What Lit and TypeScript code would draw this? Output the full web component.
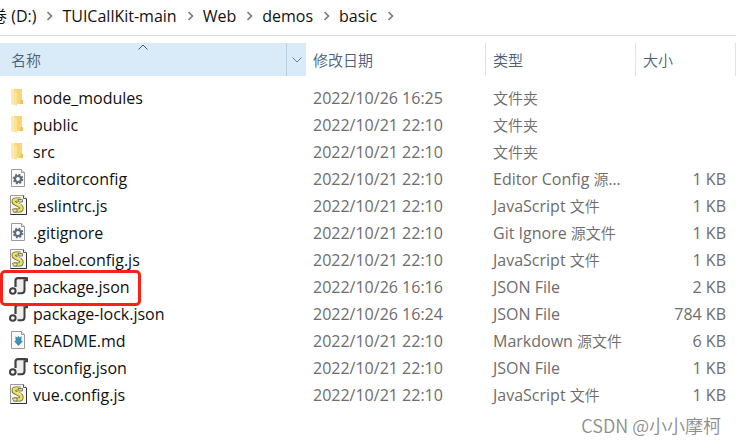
import { LitElement, html, css, svg, nothing } from "lit";
import { customElement, property } from "lit/decorators.js";

type Kind = "folder" | "config" | "script" | "json" | "markdown";

interface Entry {
  name: string;
  kind: Kind;
  date: string;
  latin: string;
  cjk: string;
  size: string;
  marked?: boolean;
}

const OCT21 = "2022/10/21 22:10";

const ENTRIES: Entry[] = [
  { name: "node_modules", kind: "folder", date: "2022/10/26 16:25", latin: "", cjk: "文件夹", size: "" },
  { name: "public", kind: "folder", date: OCT21, latin: "", cjk: "文件夹", size: "" },
  { name: "src", kind: "folder", date: OCT21, latin: "", cjk: "文件夹", size: "" },
  { name: ".editorconfig", kind: "config", date: OCT21, latin: "Editor Config ", cjk: "源...", size: "1 KB" },
  { name: ".eslintrc.js", kind: "script", date: OCT21, latin: "JavaScript ", cjk: "文件", size: "1 KB" },
  { name: ".gitignore", kind: "config", date: OCT21, latin: "Git Ignore ", cjk: "源文件", size: "1 KB" },
  { name: "babel.config.js", kind: "script", date: OCT21, latin: "JavaScript ", cjk: "文件", size: "1 KB" },
  { name: "package.json", kind: "json", date: "2022/10/26 16:16", latin: "JSON File", cjk: "", size: "2 KB", marked: true },
  { name: "package-lock.json", kind: "json", date: "2022/10/26 16:24", latin: "JSON File", cjk: "", size: "784 KB" },
  { name: "README.md", kind: "markdown", date: OCT21, latin: "Markdown ", cjk: "源文件", size: "6 KB" },
  { name: "tsconfig.json", kind: "json", date: OCT21, latin: "JSON File", cjk: "", size: "1 KB" },
  { name: "vue.config.js", kind: "script", date: OCT21, latin: "JavaScript ", cjk: "文件", size: "1 KB" },
];

const page = svg`
  <path d="M2.5 1.5h10l3 3v14h-13z" fill="#fafafa" stroke="#9a9a9a"/>
  <path d="M12.5 1.5v3h3" fill="#e6e6e6" stroke="#9a9a9a"/>`;

const ICONS: Record<Kind, unknown> = {
  folder: svg`
    <path d="M5 2h8v11h1v4H5z" fill="#f8d674"/>
    <path d="M12 13h2v4h-3z" fill="#eec25a"/>
    <path d="M2 2h1l5 3v13.700L2 17z" fill="#fde39a"/>
    <path d="M2 2h1l2 1.200V17.800L2 17z" fill="#fdeab2"/>`,
  config: svg`${page}
    <circle cx="9" cy="11" r="4.4" fill="none" stroke="#5d6f7c" stroke-width="1.8" stroke-dasharray="1.9 1.55"/>
    <circle cx="9" cy="11" r="3" fill="#fff" stroke="#5d6f7c" stroke-width="2.2"/>`,
  script: svg`
    <path d="M1.500 .5h13l3 3v16h-16z" fill="#f7f7f4" stroke="#9a9a9a"/>
    <path d="M17.500 4v15.500h-16" fill="none" stroke="#303030"/>
    <path d="M14.500 .5v3h3" fill="#fff" stroke="#555"/>
    <path d="M11.500 4.500H7c-3 0-3 3-.5 4.200l4 2c3 1.500 2.500 4.800-.5 4.800H5" fill="none" stroke="#6d6b4c" stroke-width="4.200"/>
    <path d="M11.500 4.500H7c-3 0-3 3-.5 4.200l4 2c3 1.500 2.500 4.800-.5 4.800H5" fill="none" stroke="#eee25a" stroke-width="2.600"/>
    <path d="M9 4.500h4.500v2.500H10z" fill="#dcdccb" stroke="#6d6b4c" stroke-width=".8"/>
    <path d="M8 8l4 2.200" stroke="#fbf7b0"/>
    <path d="M3.500 14h4.500v3H4.500z" fill="#f4ee86" stroke="#6d6b4c" stroke-width=".8"/>`,
  json: svg`
    <path d="M6 2h9v14H7l-1-4z" fill="#eee"/>
    <path d="M6.500 11V4.500Q6.500 2.200 9 2.200h8" fill="none" stroke="#3f3f41" stroke-width="2.200"/>
    <path d="M18 1.200v3h-2.500v10q0 3-3 3H8.500" fill="none" stroke="#3f3f41" stroke-width="2"/>
    <circle cx="3.800" cy="15" r="2.800" fill="#fff" stroke="#3f3f41" stroke-width="2"/>`,
  markdown: svg`${page}
    <path d="M6.500 6l1.700 1.500L9.500 6 11 7.500 12.500 6v5H14l-4.500 5L5 11h1.500z" fill="#3f8fb0"/>`,
};

@customElement("file-icon")
export class FileIcon extends LitElement {
  @property() kind: Kind = "folder";

  static styles = css`
    :host { display: block; width: 20px; height: 20px; flex: none; }
    .icon { display: block; width: 20px; height: 20px; }
  `;

  render() {
    return html`<svg class="icon" viewBox="0 0 20 20" aria-hidden="true">${ICONS[this.kind]}</svg>`;
  }
}

@customElement("app-root")
export class AppRoot extends LitElement {
  static styles = css`
    :host {
      display: block;
      position: relative;
      overflow: hidden;
      min-height: 100vh;
      background: #fff;
      color: #111;
      font: 16px/26px "Open Sans", "Noto Sans CJK SC", sans-serif;
    }
    .path {
      height: 35px;
      border-bottom: 1px solid #d9d9d9;
      overflow: hidden;
    }
    .crumbs {
      display: flex;
      margin: 0 0 0 -9px;
      padding: 3px 0 0;
      list-style: none;
    }
    .crumb { display: flex; align-items: center; white-space: nowrap; }
    .crumb-link { color: inherit; text-decoration: none; }
    .sep { width: 7px; height: 10px; margin: 0 9px 0 10px; }
    .files {
      width: 100%;
      margin-top: 7px;
      table-layout: fixed;
      border-collapse: separate;
      border-spacing: 0;
    }
    .c-date { width: 180px; }
    .c-type { width: 150px; }
    .c-size { width: 100px; }
    .head {
      height: 33px;
      padding: 0;
      border-right: 1px solid #e2e2e2;
      box-sizing: border-box;
      text-align: left;
    }
    .head.sorted { background: #d9ebf9; border-right: 0; }
    .split { display: flex; position: relative; height: 33px; }
    .sort {
      display: block;
      flex: 1;
      width: 100%;
      height: 33px;
      padding: 0 7px;
      border: 0;
      background: none;
      color: #4c607a;
      font: 350 15px/30px "Noto Sans CJK SC", sans-serif;
      text-align: left;
    }
    .sorted .sort { padding-left: 11px; }
    .up { position: absolute; top: 1px; left: 50%; width: 10px; height: 6px; margin-left: -15px; }
    .drop {
      display: flex;
      align-items: center;
      justify-content: center;
      width: 20px;
      padding: 0;
      border: 0;
      border-left: 1px solid #b9d0e2;
      background: none;
    }
    .down { width: 10px; height: 6px; }
    .body::before { content: ""; display: block; height: 9px; }
    .cell {
      height: 27px;
      padding: 0 7px;
      color: #6d6d6d;
      line-height: 26px;
      vertical-align: top;
      white-space: nowrap;
      overflow: hidden;
    }
    .cell.name { padding: 0 0 0 9px; color: #111; text-align: left; font-weight: 400; }
    .cell.size { padding-right: 10px; text-align: right; }
    .cell.marked { position: relative; overflow: visible; }
    .file { display: flex; align-items: flex-start; gap: 4px; }
    .glyph { margin-top: 2px; }
    .cjk { font: 350 15px/20px "Noto Sans CJK SC", sans-serif; }
    .ring {
      position: absolute;
      left: 0;
      top: -4px;
      width: 141px;
      height: 36px;
      box-sizing: border-box;
      border: 3px solid #fb2018;
      border-radius: 5px;
      pointer-events: none;
    }
    .mark {
      position: absolute;
      right: 15px;
      bottom: 6px;
      margin: 0;
      color: #8d8d8d;
      font: 350 18px/26px "Noto Sans CJK SC", sans-serif;
    }
  `;

  private crumb(label: string) {
    return html`<li class="crumb">
      <a class="crumb-link" href="#">${label}</a>
      <svg class="sep" viewBox="0 0 7 10" aria-hidden="true">
        <path d="M1.500 1L5.500 5l-4 4" fill="none" stroke="#777" stroke-width="1.600"/>
      </svg>
    </li>`;
  }

  private row(e: Entry) {
    return html`<tr>
      <th scope="row" class="cell name ${e.marked ? "marked" : ""}">
        <div class="file"><file-icon class="glyph" .kind=${e.kind}></file-icon><span>${e.name}</span></div>
        ${e.marked ? html`<div class="ring"></div>` : nothing}
      </th>
      <td class="cell">${e.date}</td>
      <td class="cell">${e.latin}${e.cjk ? html`<span class="cjk">${e.cjk}</span>` : nothing}</td>
      <td class="cell size">${e.size}</td>
    </tr>`;
  }

  render() {
    return html`
      <nav class="path" aria-label="路径">
        <ol class="crumbs">
          ${["卷 (D:)", "TUICallKit-main", "Web", "demos", "basic"].map((c) => this.crumb(c))}
        </ol>
      </nav>
      <table class="files">
        <colgroup>
          <col /><col class="c-date" /><col class="c-type" /><col class="c-size" />
        </colgroup>
        <thead>
          <tr>
            <th scope="col" class="head sorted" aria-sort="ascending">
              <div class="split">
                <button class="sort" type="button">名称
                  <svg class="up" viewBox="0 0 10 6" aria-hidden="true"><path d="M.5 5.500L5 1l4.500 4.500" fill="none" stroke="#555"/></svg>
                </button>
                <button class="drop" type="button" aria-label="筛选">
                  <svg class="down" viewBox="0 0 10 6" aria-hidden="true"><path d="M.5 .5L5 5 9.500 .5" fill="none" stroke="#6b7f92"/></svg>
                </button>
              </div>
            </th>
            <th scope="col" class="head"><button class="sort" type="button">修改日期</button></th>
            <th scope="col" class="head"><button class="sort" type="button">类型</button></th>
            <th scope="col" class="head"><button class="sort" type="button">大小</button></th>
          </tr>
        </thead>
        <tbody class="body">${ENTRIES.map((e) => this.row(e))}</tbody>
      </table>
      <p class="mark">CSDN @小小摩柯</p>
    `;
  }
}
